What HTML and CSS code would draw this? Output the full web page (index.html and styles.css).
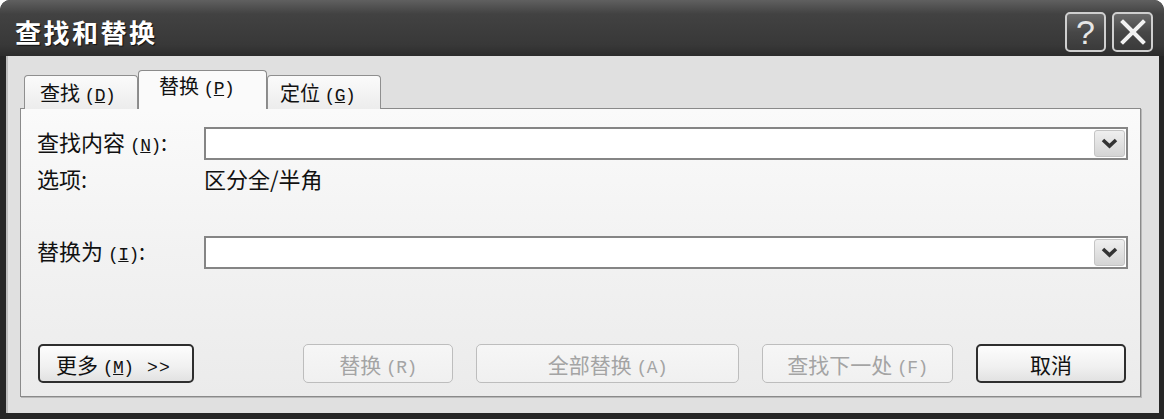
FILE: index.html
```html
<!DOCTYPE html>
<html lang="zh-CN">
  <head>
    <meta charset="UTF-8" />
    <title>查找和替换</title>
    <link rel="stylesheet" href="styles.css">
  </head>
  <body>
    <div class="window">
      <div class="titlebar">
        <h1>查找和替换</h1>
        <div class="title-buttons">
          <button type="button" class="tbtn help">?</button>
          <button type="button" class="tbtn close">
            <svg width="26" height="26" viewBox="0 0 26 26">
              <path d="M3 3 L23 23 M23 3 L3 23" stroke="#f2f2f2" stroke-width="4" stroke-linecap="square" fill="none" />
            </svg>
          </button>
        </div>
      </div>
      <div class="client">
        <div class="tabs">
          <div class="tab tab-find">查找 <span class="key">(<u>D</u>)</span></div>
          <div class="tab active">替换 <span class="key">(<u>P</u>)</span></div>
          <div class="tab tab-goto">定位 <span class="key">(<u>G</u>)</span></div>
        </div>
        <div class="panel">
          <div class="form">
            <label for="findText">查找内容 <span class="key">(<u>N</u>)</span>:</label>
            <div class="combo">
              <input type="text" id="findText" />
              <span class="drop">
                <svg width="17" height="11" viewBox="0 0 17 11">
                  <polyline points="2,2 8.5,8 15,2" stroke="#333" stroke-width="3.6" fill="none" />
                </svg>
              </span>
            </div>
            <div class="opt-label">选项:</div>
            <div class="opt-value">区分全/半角</div>
            <label for="replaceText">替换为 <span class="key">(<u>I</u>)</span>:</label>
            <div class="combo">
              <input type="text" id="replaceText" />
              <span class="drop">
                <svg width="17" height="11" viewBox="0 0 17 11">
                  <polyline points="2,2 8.5,8 15,2" stroke="#333" stroke-width="3.6" fill="none" />
                </svg>
              </span>
            </div>
          </div>
          <div class="actions">
            <button type="button" class="btn more">更多 <span class="key">(<u>M</u>)</span>&nbsp; <span class="chev">&gt;&gt;</span></button>
            <button type="button" class="btn replace" disabled>替换 <span class="key">(R)</span></button>
            <button type="button" class="btn replace-all" disabled>全部替换 <span class="key">(A)</span></button>
            <button type="button" class="btn find-next" disabled>查找下一处 <span class="key">(F)</span></button>
            <button type="button" class="btn cancel">取消</button>
          </div>
        </div>
      </div>
    </div>
  </body>
</html>
```

FILE: styles.css
```css
body {
    margin: 0;
    padding: 0;
    background-color: #fff;
    font-family: "Noto Sans CJK SC", "Liberation Sans", sans-serif;
    width: 1164px;
    height: 419px;
    overflow: hidden;
}
.window {
    display: flex;
    flex-direction: column;
    height: 419px;
    background-color: #262626;
    border-radius: 10px 10px 0 0;
    box-sizing: border-box;
}
.titlebar {
    height: 56px;
    display: flex;
    align-items: center;
    padding: 8px 11px 0 15px;
    box-sizing: border-box;
    background: linear-gradient(#606060, #424242 25%, #383838 80%, #2c2c2c);
    border-radius: 10px 10px 0 0;
}
.titlebar h1 {
    margin: 0;
    color: #fff;
    font-size: 26px;
    font-weight: bold;
    letter-spacing: 2.5px;
    line-height: 30px;
    text-shadow: 1px 1px 1px #111;
}
.title-buttons {
    margin-left: auto;
    display: flex;
    gap: 6px;
}
.tbtn {
    width: 41px;
    height: 40px;
    border: 2px solid #cfcfcf;
    border-radius: 5px;
    background: linear-gradient(#6a6a6a, #474747 50%, #3a3a3a);
    color: #e6e6e6;
    padding: 0;
    display: flex;
    align-items: center;
    justify-content: center;
    box-sizing: border-box;
}
.tbtn.help {
    font-family: "Liberation Sans", sans-serif;
    font-size: 34px;
    line-height: 34px;
}
.client {
    flex: 1;
    display: flex;
    flex-direction: column;
    margin: 0 5px 6px 6px;
    padding: 14px 18px 16px 14px;
    background-color: #e0e0e0;
    box-shadow: inset 2px 0 0 #bdbdbd;
}
.tabs {
    display: flex;
    align-items: flex-end;
    padding-left: 4px;
    position: relative;
    z-index: 1;
    margin-bottom: -1px;
}
.tab {
    height: 34px;
    box-sizing: border-box;
    border: 1px solid #8f8f8f;
    border-bottom: none;
    border-radius: 4px 4px 0 0;
    background: linear-gradient(#fbfbfb, #ececec);
    font-size: 20px;
    line-height: 30px;
    color: #111;
    padding-top: 2px;
}
.tab-find {
    width: 114px;
    padding-left: 15px;
}
.tab-goto {
    width: 114px;
    padding-left: 12px;
}
.tab.active {
    width: 129px;
    height: 39px;
    background: #fafafa;
    border-color: #8a8a8a;
    padding-left: 20px;
    padding-top: 0;
}
.key {
    font-family: "Liberation Mono", monospace;
    font-size: 18px;
    letter-spacing: -0.5px;
}
.panel {
    flex: 1;
    display: flex;
    flex-direction: column;
    border: 1px solid #8a8a8a;
    background: linear-gradient(#fafafa, #f2f2f2 50%, #ebebeb);
    padding: 18px 12px 13px 16px;
    box-shadow: 1px 1px 0 #b8b8b8;
}
.form {
    display: grid;
    grid-template-columns: 167px 1fr;
    grid-template-rows: 33px 76px 33px;
    align-items: center;
    font-size: 22px;
    color: #111;
}
.form label {
    line-height: 30px;
}
.opt-label,
.opt-value {
    align-self: start;
    margin-top: 3px;
    line-height: 30px;
}
.combo {
    height: 33px;
    border: 2px solid #858585;
    background-color: #fff;
    box-sizing: border-box;
    display: flex;
    align-items: center;
}
.combo input {
    flex: 1;
    border: none;
    outline: none;
    height: 100%;
    padding: 0 6px;
    background: transparent;
    font-size: 18px;
}
.drop {
    width: 31px;
    height: 27px;
    margin-right: 1px;
    border: 1px solid #c4c4c4;
    border-radius: 3px;
    background: linear-gradient(#efefef, #d4d4d4);
    box-sizing: border-box;
    display: flex;
    align-items: center;
    justify-content: center;
}
.actions {
    margin-top: auto;
    display: flex;
    gap: 23px;
    padding-left: 1px;
}
.btn {
    height: 39px;
    box-sizing: border-box;
    border: 2px solid #2e2e2e;
    border-radius: 5px;
    background: linear-gradient(#fdfdfd, #f0f0f0 60%, #e2e2e2);
    font-family: "Noto Sans CJK SC", sans-serif;
    font-size: 21px;
    color: #111;
    padding: 0;
    cursor: pointer;
}
.btn:disabled {
    border: 1px solid #bdbdbd;
    background: linear-gradient(#f6f6f6, #f0f0f0);
    color: #a4a4a4;
    cursor: default;
}
.more {
    width: 156px;
    text-align: left;
    padding-left: 16px;
}
.chev {
    font-family: "Liberation Mono", monospace;
    font-size: 18px;
    letter-spacing: 1px;
    margin-left: 4px;
}
.replace {
    width: 150px;
    margin-left: 86px;
}
.replace-all {
    width: 263px;
}
.find-next {
    width: 191px;
}
.cancel {
    width: 150px;
}
```
